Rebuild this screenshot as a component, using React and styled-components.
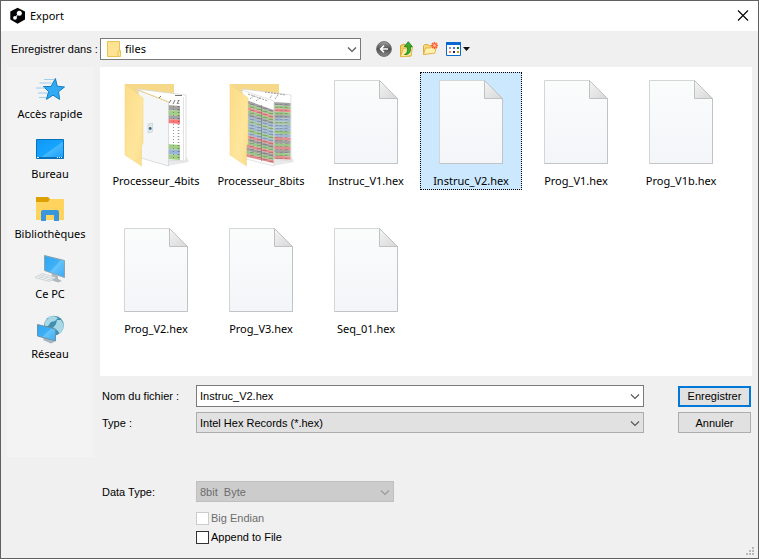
import React, { useState } from 'react';
import styled, { createGlobalStyle } from 'styled-components';

const dialogFont = '"Liberation Sans", Arial, sans-serif';
const shellFont = '"Noto Sans", "Open Sans", sans-serif';

const GlobalStyle = createGlobalStyle`
  *, *::before, *::after { box-sizing: border-box; }
  body { margin: 0; background: #f0f0f0; color: #000; font: 11px/14px ${dialogFont}; }
  button, input, select { font: inherit; color: inherit; margin: 0; border-radius: 0; }
`;

const Window = styled.main`
  display: flex;
  flex-direction: column;
  min-height: 100vh;
  border: 1px solid #606060;
  background: #f0f0f0;
`;

const TitleBar = styled.header`
  display: flex;
  align-items: center;
  gap: 4px;
  height: 30px;
  padding: 0 9px 0 9px;
  background: #fff;
`;

const Title = styled.h1`
  flex: 1;
  margin: 0;
  font: 400 11px/16px ${shellFont};
`;

const IconButton = styled.button`
  display: flex;
  align-items: center;
  padding: 0;
  border: 0;
  background: none;
`;

const LookInBar = styled.div`
  display: flex;
  align-items: center;
  height: 36px;
  padding-left: 10px;
`;

const LookInLabel = styled.label`
  width: 89px;
`;

const Toolbar = styled.div`
  display: flex;
  align-items: center;
  gap: 7px;
  margin-left: 15px;
`;

const Content = styled.div`
  display: grid;
  grid-template-columns: 87px minmax(0, 1fr);
  gap: 6px;
  align-items: start;
  padding: 0 6px;
`;

const Places = styled.nav`
  display: flex;
  flex-direction: column;
  min-height: 390px;
  padding-top: 7px;
  background: #f3f3f3;
`;

const Place = styled.button`
  display: flex;
  flex-direction: column;
  align-items: center;
  height: 60px;
  padding: 0 1px 0 0;
  border: 0;
  background: none;
  font: 11px/16px ${shellFont};
  white-space: nowrap;
`;

const FileList = styled.section`
  display: grid;
  grid-template-columns: repeat(auto-fill, 102px);
  align-content: start;
  gap: 30px 3px;
  min-height: 309px;
  padding: 5px;
  background: #fff;
`;

const FileTile = styled.button`
  display: flex;
  flex-direction: column;
  align-items: center;
  height: 118px;
  padding: 7px 0 0;
  border: 1px ${(p) => (p.$selected ? 'dotted #000' : 'solid transparent')};
  background: ${(p) => (p.$selected ? '#cce8ff' : 'transparent')};
  font: 11px/16px ${shellFont};
  white-space: nowrap;
`;

const Form = styled.form`
  display: grid;
  grid-template-columns: 90px minmax(0, 1fr) 73px;
  column-gap: 4px;
  row-gap: 5px;
  align-items: center;
  padding: 9px 1px 0 2px;
`;

const Options = styled.div`
  display: grid;
  grid-template-columns: 90px 198px;
  column-gap: 4px;
  align-items: center;
  padding: 48px 0 0 2px;
`;

const Checks = styled.div`
  display: flex;
  flex-direction: column;
  grid-column: 2;
  gap: 5px;
  padding-top: 9px;
`;

const Combo = styled.div`
  display: grid;
  grid-template-columns: minmax(0, 1fr) 22px;
  align-items: center;
  width: ${(p) => p.$width || 'auto'};
  margin-right: ${(p) => p.$after || '0'};
  & > * { grid-row: 1; }
  & > svg { pointer-events: none; grid-column: 2; }
`;

const fieldTone = {
  white: ['#fff', '#7a7a7a', '#000'],
  grey: ['#e1e1e1', '#adadad', '#000'],
  disabled: ['#ccc', '#bfbfbf', '#6d6d6d'],
};

const Select = styled.select`
  grid-column: 1 / -1;
  width: 100%;
  height: ${(p) => (p.$tone === 'white' ? 22 : 21)}px;
  padding: 0 22px 0 ${(p) => (p.$withIcon ? 24 : 3)}px;
  appearance: none;
  border: 1px solid ${(p) => fieldTone[p.$tone][1]};
  background: ${(p) => fieldTone[p.$tone][0]};
  color: ${(p) => fieldTone[p.$tone][2]};
  font-family: ${(p) => (p.$withIcon ? shellFont : dialogFont)};
  opacity: 1;
`;

const TextInput = styled.input`
  grid-column: 1 / -1;
  width: 100%;
  height: 22px;
  padding: 0 22px 0 3px;
  border: 1px solid #7a7a7a;
  background: #fff;
  outline: 0;
`;

const LeadIcon = styled.span`
  grid-column: 1;
  display: flex;
  padding-left: 7px;
  pointer-events: none;
`;

const PushButton = styled.button`
  height: 21px;
  padding: 0;
  border: ${(p) => (p.$primary ? '2px solid #0078d7' : '1px solid #adadad')};
  background: #e1e1e1;
`;

const CheckLabel = styled.label`
  display: flex;
  align-items: center;
  gap: 2px;
  color: ${(p) => (p.$disabled ? '#6d6d6d' : '#000')};
`;

const CheckBox = styled.input`
  appearance: none;
  width: 13px;
  height: 13px;
  border: 1px solid #333;
  background: #fff;
  &:disabled { border-color: #ccc; }
  &:checked { background: #0078d7; box-shadow: inset 0 0 0 2px #fff; }
`;

const StatusArea = styled.footer`
  display: flex;
  flex: 1;
  align-items: flex-end;
  justify-content: flex-end;
  padding: 0 3px 2px;
`;

const Chevron = ({ color = '#555' }) => (
  <svg width="22" height="20" viewBox="0 0 22 20" fill="none" stroke={color} strokeWidth="1.1" aria-hidden="true">
    <path d="M9 8.5 13 12.5 17 8.5" />
  </svg>
);

const AppLogo = () => (
  <svg width="16" height="18" viewBox="0 0 16 18" aria-hidden="true">
    <path d="M7.6 .8 15 4.6V12.6L7.6 16.7.3 12.6V4.6Z" fill="#050505" />
    <circle cx="9.3" cy="6.2" r="2.5" fill="#fff" />
    <circle cx="5" cy="10.8" r="1.9" fill="#fff" />
    <path d="M6.9 8 7.7 8.6 6.4 10 5.6 9.3Z" fill="#fff" />
  </svg>
);

const CloseIcon = () => (
  <svg width="12" height="12" viewBox="0 0 12 12" stroke="#000" strokeWidth="1.1" aria-hidden="true">
    <path d="M1 .5 11 10.5M11 .5 1 10.5" />
  </svg>
);

const SmallFolder = () => (
  <svg width="14" height="16" viewBox="0 0 14 16" aria-hidden="true">
    <path d="M.5.5H12.5V9.5H13.5V15.5H.5Z" fill="#ffe394" stroke="#e8c351" />
    <path d="M11 15V10H12.5" fill="none" stroke="#e8c351" />
  </svg>
);

const BackIcon = () => (
  <svg width="16" height="16" viewBox="0 0 16 16" aria-hidden="true">
    <defs>
      <linearGradient id="back" x2="0" y2="1">
        <stop stopColor="#a5a5a5" />
        <stop offset=".5" stopColor="#4e4e4e" />
        <stop offset="1" stopColor="#8f8f8f" />
      </linearGradient>
    </defs>
    <circle cx="8" cy="8" r="7.4" fill="url(#back)" stroke="#666" strokeWidth=".9" />
    <path d="M12 8H5M8 4.6 4.6 8 8 11.4" fill="none" stroke="#fff" strokeWidth="1.6" />
  </svg>
);

const UpIcon = () => (
  <svg width="16" height="17" viewBox="0 0 16 17" aria-hidden="true">
    <path d="M1.5 4.5 5 3 7 4.5H12V15L1.5 15.5Z" fill="#f3cf67" stroke="#d7a832" />
    <path d="M1.5 15.8 4.2 7.5 13.5 6 12 14.8Z" fill="#ffeaa0" stroke="#dfb947" />
    <path d="M5.5 13.5C8.5 12.5 8.7 10 8.2 5.6H5.3L9.3.7 13.3 5.6H11.3C12.2 11 10.2 14 5.5 13.5Z" fill="#38ad31" stroke="#187b1a" strokeWidth=".8" />
  </svg>
);

const NewFolderIcon = () => (
  <svg width="16" height="16" viewBox="0 0 16 16" aria-hidden="true">
    <path d="M1.5 4.5 2.5 3.5H6L7 4.8H12.5V11L1.5 13.5Z" fill="#f7d876" stroke="#dfac3d" />
    <path d="M1.5 13.5 3.5 7H8L9.3 6H14.5L12.7 12.2Z" fill="#fff0ae" stroke="#e4b550" />
    <path d="M12.5 1V8M9 4.5H16M10 2 15 7M15 2 10 7" stroke="#ff5b2e" strokeWidth="1.4" />
    <circle cx="12.5" cy="4.5" r="1.2" fill="#ffd2a8" />
  </svg>
);

const ViewIcon = () => (
  <svg width="26" height="16" viewBox="0 0 26 16" aria-hidden="true">
    <path d="M1.5 1.5H15.5V14.5H1.5Z" fill="#fff" stroke="#0869cf" />
    <path d="M1 1H16V4H1Z" fill="#0869cf" />
    <path d="M4 6H6V8H4Z" fill="#9b91c0" />
    <path d="M8 6H10V8H8Z" fill="#5175d5" />
    <path d="M12 6H14V8H12Z" fill="#168326" />
    <path d="M4 10H6V12H4Z" fill="#ff8055" />
    <path d="M8 10H10V12H8Z" fill="#16246d" />
    <path d="M12 10H14V12H12Z" fill="#c69d08" />
    <path d="M18 6H25L21.5 10Z" fill="#111" />
  </svg>
);

const PlaceSvg = ({ children }) => (
  <svg width="32" height="32" viewBox="0 0 32 32" aria-hidden="true">
    <defs>
      <linearGradient id="screen" x1="0" y1="0" x2="1" y2="1">
        <stop stopColor="#0f97f4" />
        <stop offset=".54" stopColor="#16a4ff" />
        <stop offset=".56" stopColor="#45b8ff" />
        <stop offset="1" stopColor="#169dfb" />
      </linearGradient>
      <linearGradient id="monitor" x1="0" y1="0" x2="1" y2="1">
        <stop stopColor="#2ea6f2" />
        <stop offset=".5" stopColor="#3fb0f7" />
        <stop offset=".52" stopColor="#66c4fb" />
        <stop offset="1" stopColor="#3aabf5" />
      </linearGradient>
    </defs>
    {children}
  </svg>
);

const QuickIcon = () => (
  <PlaceSvg>
    <path d="M21.4 4.5 23.2 12.2 30.5 13 24.6 17.6 25.6 25.4 19 21.2 12.4 25.4 14.6 17.6 9.4 12.5H17Z" fill="#32aaf3" stroke="#137dc4" />
    <path d="M10 5.5H20.5M5.5 9H17.5M2 14H11M4 19H13M5 23.5H12" stroke="#86c4ef" strokeWidth=".8" />
  </PlaceSvg>
);

const DesktopIcon = () => (
  <PlaceSvg>
    <path d="M2.5 5.5H29.5V24.5H2.5Z" fill="url(#screen)" stroke="#0872b8" />
    <path d="M3 23H29V24H3Z" fill="#0872b8" />
    <path d="M3 23H5V24H3ZM23 23H24V24H23ZM25 23H26V24H25ZM27 23H28V24H27Z" fill="#fff" />
  </PlaceSvg>
);

const LibraryIcon = () => (
  <PlaceSvg>
    <path d="M2 3H14L16 5V10H2Z" fill="#dda000" />
    <path d="M2 8H14L16 5H30V26H2Z" fill="#ffd45e" />
    <path d="M7 27V18Q7 16 9 16H23Q25 16 25 18V27H20V21H12V27Z" fill="#3996dd" />
  </PlaceSvg>
);

const ComputerIcon = () => (
  <PlaceSvg>
    <path d="M18 19 24 22V25L28 27 24 28.5 17 26Z" fill="#aeb9bf" />
    <path d="M10.5 1.5 30.5 6.5V23.5L10.5 16.5Z" fill="url(#monitor)" stroke="#8aa3b0" />
    <path d="M8 19.5 22 23.5 15 27.5 1 23.5Z" fill="#f1f3f4" stroke="#bcc4c8" strokeWidth=".6" />
    <path d="M6 20.8 19.5 25M4 22.2 17.5 26.4M11 20.5 5 24.5M15 21.8 9 25.7M19 23 13 27" stroke="#c3cbcf" strokeWidth=".6" />
  </PlaceSvg>
);

const NetworkIcon = () => (
  <PlaceSvg>
    <circle cx="20" cy="11.5" r="9.8" fill="#408fae" />
    <path d="M11 8Q14 3 20 2L24 4 21 7 17 8 14 12 11 12ZM23 6 27 6Q31 11 29 15L26 20 23 16 19 14 22 10ZM13 3 18 2 16 5Z" fill="#a8d8e6" />
    <path d="M11 21 17 24V26L21 27.5 17 29.5 9 26Z" fill="#a7b7c1" />
    <path d="M3.5 10.5 21.5 15V27L3.5 22Z" fill="url(#monitor)" stroke="#6f91a5" />
  </PlaceSvg>
);

const DocumentIcon = () => (
  <svg width="66" height="93" viewBox="0 0 66 93" aria-hidden="true">
    <defs>
      <linearGradient id="paper" x2="0" y2="1">
        <stop stopColor="#fbfcfc" />
        <stop offset="1" stopColor="#f3f5f8" />
      </linearGradient>
      <linearGradient id="fold" x2="1" y2="1">
        <stop stopColor="#f4f4f4" />
        <stop offset="1" stopColor="#d7d7d7" />
      </linearGradient>
    </defs>
    <path d="M1.5.5H46.5L64.5 18.5V83.5H1.5Z" fill="url(#paper)" stroke="#d3d5d6" />
    <path d="M64.5 18.5V83.5H1.5" fill="none" stroke="#c1c3c4" />
    <path d="M46.5.5V18.5H64.5Z" fill="url(#fold)" stroke="#bfc1c2" />
  </svg>
);

const FolderFrame = ({ children }) => (
  <svg width="66" height="93" viewBox="0 0 66 93" aria-hidden="true">
    <defs>
      <linearGradient id="flap" x2="1" y2="1">
        <stop stopColor="#fbdc88" />
        <stop offset=".65" stopColor="#ffe69c" />
        <stop offset="1" stopColor="#f9dc8a" />
      </linearGradient>
    </defs>
    <path d="M44 86 66 82 64 77 44 80Z" fill="#e9e9e9" />
    <path d="M2 4H51V20L12 14Z" fill="#f5d888" />
    {children}
    <path d="M2 4 20 18V63L18.5 66V86L2 75Z" fill="url(#flap)" stroke="#f2d27c" strokeWidth=".5" />
  </svg>
);

const sheetRows = [
  [26, 5, '#a3a3a3'], [31, 5, '#a3cf86'], [36, 4, '#a3a3a3'], [40, 4, '#ff7777'],
  [65, 5, '#a3cf86'], [70, 5, '#9bb5da'], [75, 5, '#a3cf86'],
];

const FourBitFolder = () => (
  <FolderFrame>
    <path d="M14 9 63 15V81L44 80Z" fill="#fff" stroke="#d5d5d5" strokeWidth=".8" />
    {sheetRows.map(([y, h, fill]) => <path key={y} d={`M44 ${y - 1} 57 ${y}V${y + h}L44 ${y + h - 1}Z`} fill={fill} />)}
    <path d="M50.5 26V80" stroke="#666" strokeWidth="1" strokeDasharray="1 2" opacity=".7" />
    <path d="M55.5 20V80" stroke="#333" strokeWidth="1.6" strokeDasharray="1 2" opacity=".5" />
    <path d="M52 15.5H59M46 23 48 20M50 24 52 20M54 24 56 20M36 18 38 16" stroke="#666" strokeWidth=".9" />
    <path d="M60.5 17V80" stroke="#e1e1e1" />
    <path d="M15 10 45.5 22V86L18 78Z" fill="#f5f6f8" stroke="#ced0d2" strokeWidth=".7" />
    <path d="M15 10 45.5 22" stroke="#f0d17f" />
    <path d="M25 44 29.5 43V52L25 53Z" fill="#e3e8e9" stroke="#c5cccf" strokeWidth=".6" />
    <circle cx="27.2" cy="48.5" r="1.4" fill="#376b8b" />
  </FolderFrame>
);

const stripeColors = [
  '#a3a3a3', '#9cc588', '#e99090', '#9cc588', '#a0a6a9', '#9fb7d0', '#a6c49b', '#9fb7d0',
  '#9fb7d0', '#9cc588', '#9fb7d0', '#e08e8e', '#a0a0a0', '#9cc588', '#e08e8e', '#a0a0a0', '#9cc588', '#e08e8e',
];

const EightBitFolder = () => (
  <FolderFrame>
    <path d="M14 9 63 15V81L45 79Z" fill="#fff" stroke="#d5d5d5" strokeWidth=".7" />
    {stripeColors.map((fill, i) => {
      const y = 23 + i * 3.15;
      return <path key={i} d={`M45 ${y - 1} 62.5 ${y}V${y + 3.2}L45 ${y + 2.2}Z`} fill={fill} />;
    })}
    <path d="M49 24V79M53 24V79M58 24V79" stroke="#444" strokeWidth="3" strokeDasharray=".7 2.3" opacity=".35" />
    <path d="M37 12 58 15M42 18 44 15M47 19 50 15" stroke="#888" strokeWidth=".8" strokeDasharray="2 1" />
    <path d="M14 10 46 21V86L18 79Z" fill="#fff" stroke="#d5d5d5" strokeWidth=".7" />
    {stripeColors.map((fill, i) => {
      const left = 20 + i * 3.15;
      const right = 30 + i * 2.95;
      return <path key={i} d={`M18 ${left} 45.7 ${right}V${right + 3}L18 ${left + 3.2}Z`} fill={fill} />;
    })}
    <path d="M24 24V78M31 26V80M37 28V82M43 30V83" stroke="#333" strokeWidth="4" strokeDasharray=".7 2.3" opacity=".3" />
    <path d="M33.5 25V81" stroke="#666" opacity=".5" />
    <path d="M20 14 40 21M22 19 27 15M28 21 33 17" stroke="#888" strokeWidth=".8" strokeDasharray="2 1" />
  </FolderFrame>
);

const Grip = () => (
  <svg width="9" height="9" viewBox="0 0 9 9" fill="#b8b8b8" aria-hidden="true">
    <path d="M6 0H8V2H6ZM3 3H5V5H3ZM6 3H8V5H6ZM0 6H2V8H0ZM3 6H5V8H3ZM6 6H8V8H6Z" />
  </svg>
);

const places = [
  ['Accès rapide', QuickIcon],
  ['Bureau', DesktopIcon],
  ['Bibliothèques', LibraryIcon],
  ['Ce PC', ComputerIcon],
  ['Réseau', NetworkIcon],
];

const tools = [
  ['Précédent', BackIcon],
  ['Dossier parent', UpIcon],
  ['Nouveau dossier', NewFolderIcon],
  ['Affichage', ViewIcon],
];

const files = [
  ['Processeur_4bits', FourBitFolder],
  ['Processeur_8bits', EightBitFolder],
  ...['Instruc_V1.hex', 'Instruc_V2.hex', 'Prog_V1.hex', 'Prog_V1b.hex', 'Prog_V2.hex', 'Prog_V3.hex', 'Seq_01.hex']
    .map((name) => [name, DocumentIcon]),
];

export default function App() {
  const [fileName, setFileName] = useState('Instruc_V2.hex');

  return (
    <>
      <GlobalStyle />
      <Window>
        <TitleBar>
          <AppLogo />
          <Title>Export</Title>
          <IconButton type="button" aria-label="Fermer"><CloseIcon /></IconButton>
        </TitleBar>
        <LookInBar>
          <LookInLabel htmlFor="look-in">Enregistrer dans :</LookInLabel>
          <Combo $width="261px">
            <Select id="look-in" $tone="white" $withIcon><option>files</option></Select>
            <LeadIcon><SmallFolder /></LeadIcon>
            <Chevron />
          </Combo>
          <Toolbar>
            {tools.map(([label, Icon]) => (
              <IconButton key={label} type="button" aria-label={label}><Icon /></IconButton>
            ))}
          </Toolbar>
        </LookInBar>
        <Content>
          <Places>
            {places.map(([label, Icon]) => (
              <Place key={label} type="button"><Icon />{label}</Place>
            ))}
          </Places>
          <div>
            <FileList aria-label="Fichiers">
              {files.map(([name, Icon]) => (
                <FileTile key={name} type="button" $selected={name === fileName} aria-pressed={name === fileName} onClick={() => setFileName(name)}>
                  <Icon />{name}
                </FileTile>
              ))}
            </FileList>
            <Form onSubmit={(e) => e.preventDefault()}>
              <label htmlFor="file-name">Nom du fichier :</label>
              <Combo $after="30px">
                <TextInput id="file-name" value={fileName} onChange={(e) => setFileName(e.target.value)} />
                <Chevron />
              </Combo>
              <PushButton type="submit" $primary>Enregistrer</PushButton>
              <label htmlFor="file-type">Type :</label>
              <Combo $after="30px">
                <Select id="file-type" $tone="grey"><option>Intel Hex Records (*.hex)</option></Select>
                <Chevron />
              </Combo>
              <PushButton type="button">Annuler</PushButton>
            </Form>
            <Options>
              <label htmlFor="data-type">Data Type:</label>
              <Combo>
                <Select id="data-type" $tone="disabled" disabled><option>{'8bit\u00a0\u00a0Byte'}</option></Select>
                <Chevron color="#9a9a9a" />
              </Combo>
              <Checks>
                <CheckLabel $disabled><CheckBox type="checkbox" disabled />Big Endian</CheckLabel>
                <CheckLabel><CheckBox type="checkbox" />Append to File</CheckLabel>
              </Checks>
            </Options>
          </div>
        </Content>
        <StatusArea><Grip /></StatusArea>
      </Window>
    </>
  );
}
